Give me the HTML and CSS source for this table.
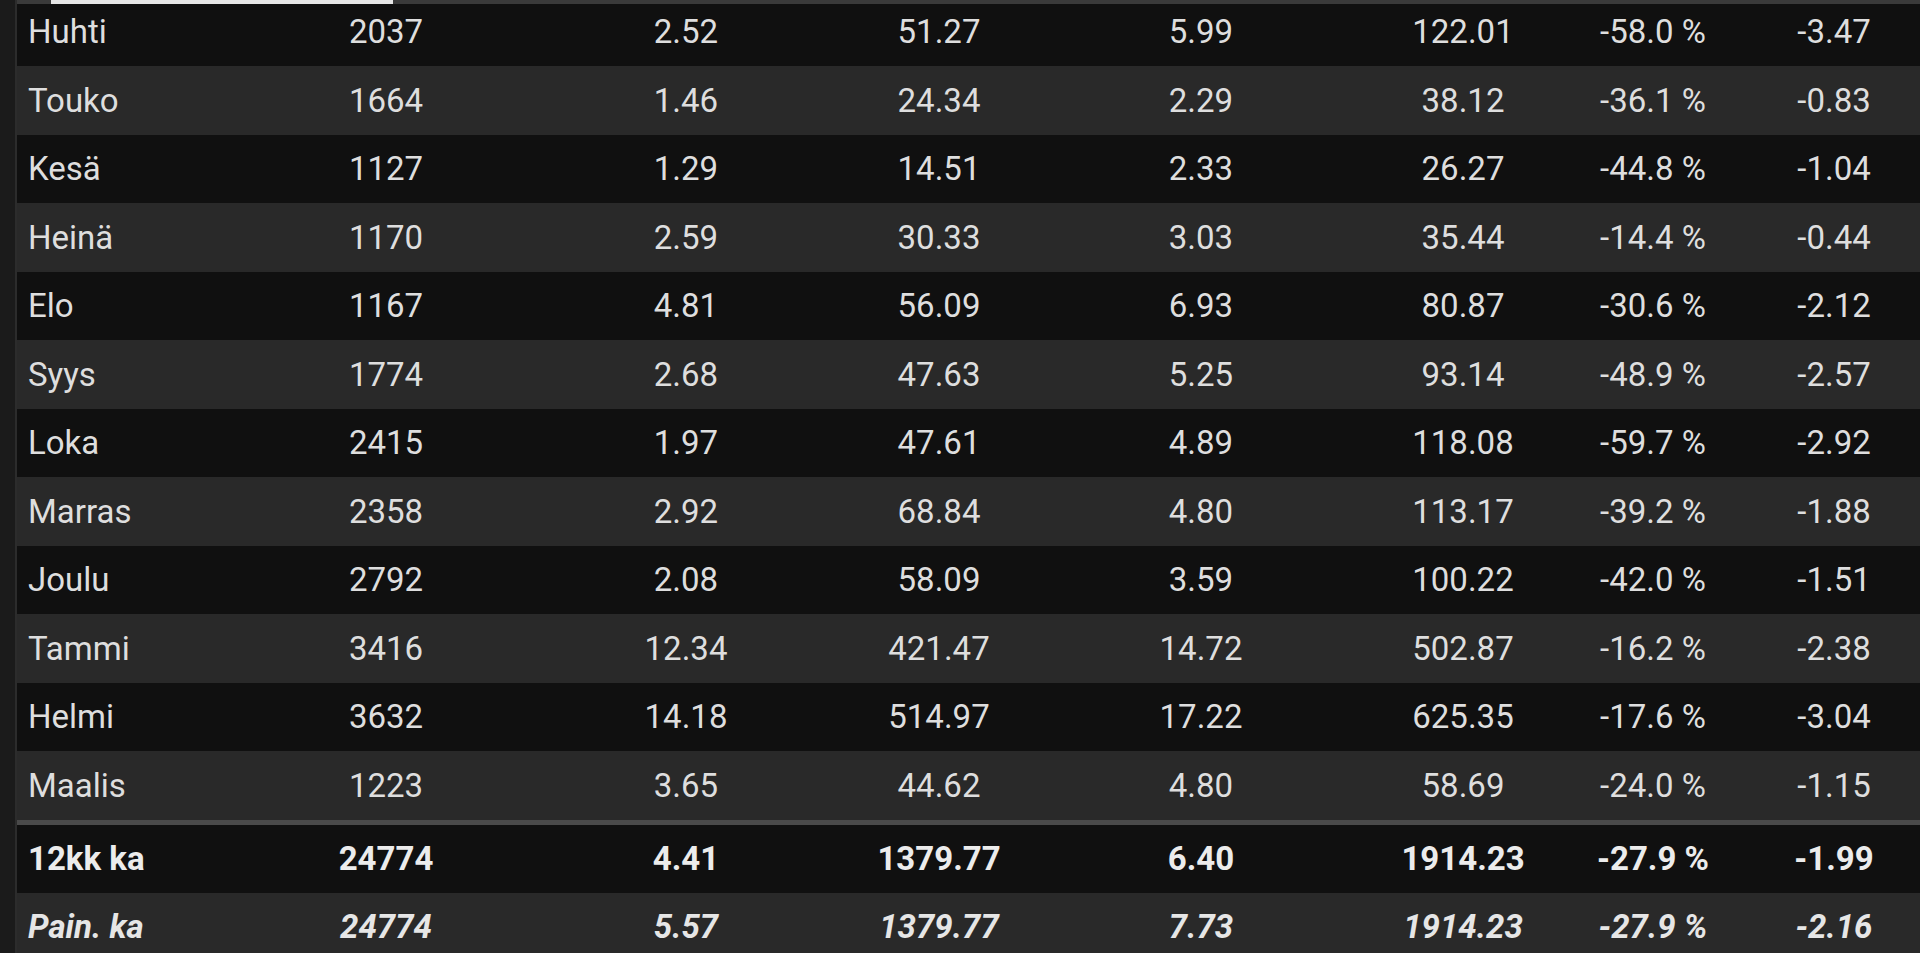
FILE: index.html
```html
<!DOCTYPE html>
<html lang="fi">
<head>
<meta charset="utf-8">
<title>Kuukausitilasto</title>
<link rel="stylesheet" href="styles.css">
</head>
<body>
<div class="screen">
  <aside class="side"></aside>
  <main class="panel">
    <div class="tabbar"><span class="indicator"></span></div>
    <div class="scroller">
      <table class="stats">
        <colgroup>
          <col class="c-month"><col class="c1"><col class="c2"><col class="c3"><col class="c4"><col class="c5"><col class="c6"><col class="c7">
        </colgroup>
        <tbody>
          <tr><td>Huhti</td><td>2037</td><td>2.52</td><td>51.27</td><td>5.99</td><td>122.01</td><td>-58.0 %</td><td>-3.47</td></tr>
          <tr><td>Touko</td><td>1664</td><td>1.46</td><td>24.34</td><td>2.29</td><td>38.12</td><td>-36.1 %</td><td>-0.83</td></tr>
          <tr><td>Kesä</td><td>1127</td><td>1.29</td><td>14.51</td><td>2.33</td><td>26.27</td><td>-44.8 %</td><td>-1.04</td></tr>
          <tr><td>Heinä</td><td>1170</td><td>2.59</td><td>30.33</td><td>3.03</td><td>35.44</td><td>-14.4 %</td><td>-0.44</td></tr>
          <tr><td>Elo</td><td>1167</td><td>4.81</td><td>56.09</td><td>6.93</td><td>80.87</td><td>-30.6 %</td><td>-2.12</td></tr>
          <tr><td>Syys</td><td>1774</td><td>2.68</td><td>47.63</td><td>5.25</td><td>93.14</td><td>-48.9 %</td><td>-2.57</td></tr>
          <tr><td>Loka</td><td>2415</td><td>1.97</td><td>47.61</td><td>4.89</td><td>118.08</td><td>-59.7 %</td><td>-2.92</td></tr>
          <tr><td>Marras</td><td>2358</td><td>2.92</td><td>68.84</td><td>4.80</td><td>113.17</td><td>-39.2 %</td><td>-1.88</td></tr>
          <tr><td>Joulu</td><td>2792</td><td>2.08</td><td>58.09</td><td>3.59</td><td>100.22</td><td>-42.0 %</td><td>-1.51</td></tr>
          <tr><td>Tammi</td><td>3416</td><td>12.34</td><td>421.47</td><td>14.72</td><td>502.87</td><td>-16.2 %</td><td>-2.38</td></tr>
          <tr><td>Helmi</td><td>3632</td><td>14.18</td><td>514.97</td><td>17.22</td><td>625.35</td><td>-17.6 %</td><td>-3.04</td></tr>
          <tr><td>Maalis</td><td>1223</td><td>3.65</td><td>44.62</td><td>4.80</td><td>58.69</td><td>-24.0 %</td><td>-1.15</td></tr>
        </tbody>
        <tfoot>
          <tr class="total"><td>12kk ka</td><td>24774</td><td>4.41</td><td>1379.77</td><td>6.40</td><td>1914.23</td><td>-27.9 %</td><td>-1.99</td></tr>
          <tr class="weighted"><td>Pain. ka</td><td>24774</td><td>5.57</td><td>1379.77</td><td>7.73</td><td>1914.23</td><td>-27.9 %</td><td>-2.16</td></tr>
        </tfoot>
      </table>
    </div>
  </main>
</div>
</body>
</html>
```

FILE: styles.css
```css
html, body {
  margin: 0;
  padding: 0;
  height: 100%;
  background: #1b1b1b;
  overflow: hidden;
}

.screen {
  display: flex;
  height: 953px;
  font-family: Roboto, "Liberation Sans", sans-serif;
}

.side {
  width: 15px;
  flex: none;
  background: #1b1b1b;
  border-right: 2px solid #2c2c2c;
}

.panel {
  flex: 1;
  display: flex;
  flex-direction: column;
  min-width: 0;
  background: #101010;
}

.tabbar {
  height: 4px;
  flex: none;
  background: #3a3a3a;
  display: flex;
}

.indicator {
  margin-left: 34px;
  width: 342px;
  background: #e6e6e6;
}

.scroller {
  flex: 1;
  overflow: hidden;
}

.stats {
  width: 1903px;
  table-layout: fixed;
  border-collapse: collapse;
  margin-top: -6.5px;
  color: #dedede;
  font-size: 33px;
}

.c-month { width: 227px; }
.c1 { width: 284px; }
.c2 { width: 316px; }
.c3 { width: 190px; }
.c4 { width: 334px; }
.c5 { width: 190px; }
.c6 { width: 190px; }
.c7 { width: 172px; }

.stats td {
  height: 68.5px;
  padding: 0;
  text-align: center;
  vertical-align: middle;
  white-space: nowrap;
}

.stats td:first-child {
  text-align: left;
  padding-left: 11px;
}

.stats tr:nth-child(odd) { background: #101010; }
.stats tr:nth-child(even) { background: #292929; }

.total td {
  border-top: 5px solid #4a4a4a;
  height: 68px;
  font-weight: 700;
  color: #ececec;
}

.weighted td {
  font-weight: 700;
  font-style: italic;
  color: #e6e6e6;
}
```
